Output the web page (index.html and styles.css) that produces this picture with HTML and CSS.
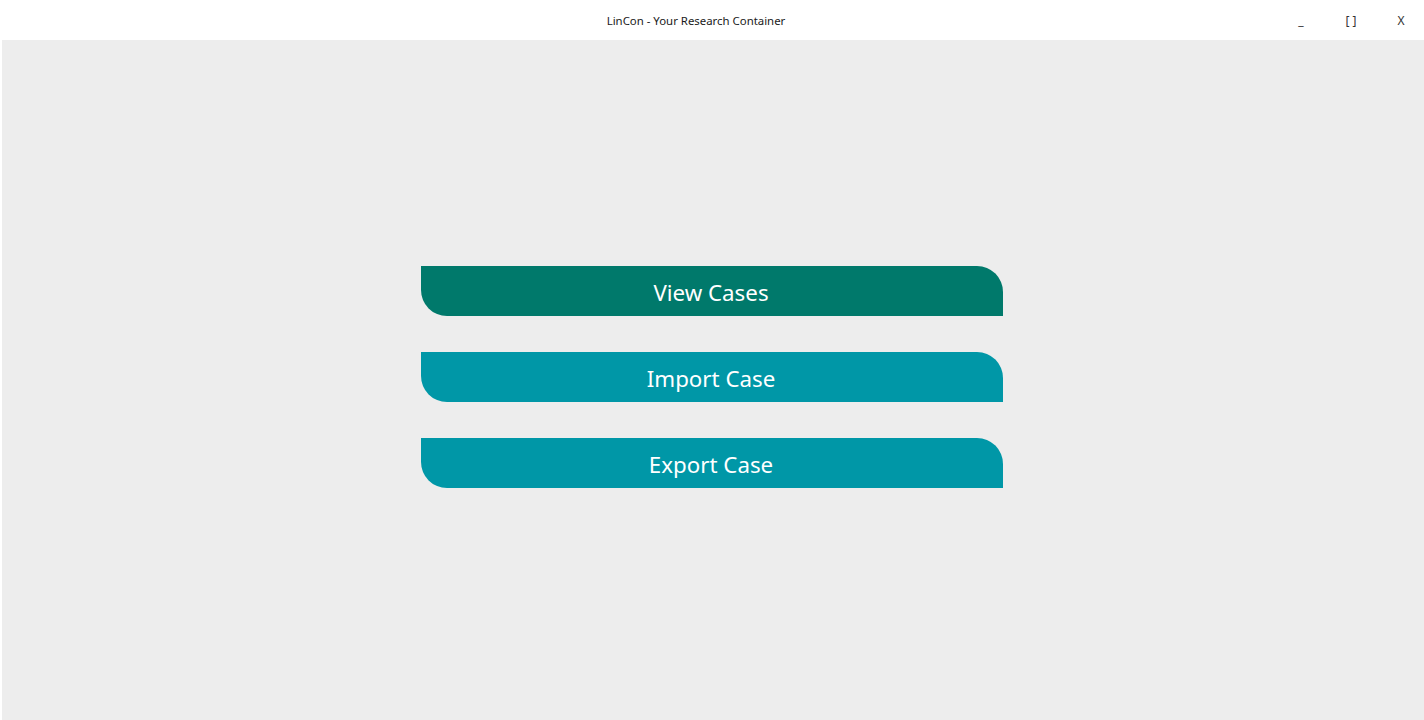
FILE: index.html
```html
<!DOCTYPE html>
<html>
<head>
<meta charset="utf-8">
<link rel="stylesheet" href="styles.css">
</head>
<body>
<div class="window">
  <header class="titlebar">
    <div class="title">LinCon - Your Research Container</div>
    <div class="controls">
      <span class="ctrl">_</span>
      <span class="ctrl">[ ]</span>
      <span class="ctrl">X</span>
    </div>
  </header>
  <main class="content">
    <div class="menu">
      <button class="btn btn-primary">View Cases</button>
      <button class="btn btn-secondary">Import Case</button>
      <button class="btn btn-secondary">Export Case</button>
    </div>
  </main>
</div>
</body>
</html>
```

FILE: styles.css
```css
* { box-sizing: border-box; }
html, body {
  margin: 0;
  padding: 0;
  width: 1424px;
  height: 720px;
  overflow: hidden;
  background: #ffffff;
  font-family: "Noto Sans", "Open Sans", "DejaVu Sans", sans-serif;
}
.window {
  display: flex;
  flex-direction: column;
  height: 720px;
}
.titlebar {
  height: 40px;
  flex: none;
  position: relative;
  display: flex;
  align-items: center;
  justify-content: center;
  background: #ffffff;
}
.title {
  font-size: 11.4px;
  color: #1a1a1a;
  margin-left: -32px;
  margin-top: 1px;
}
.controls {
  position: absolute;
  right: -2px;
  top: 0;
  height: 40px;
  display: flex;
}
.ctrl {
  width: 50px;
  height: 40px;
  display: flex;
  align-items: center;
  justify-content: center;
  font-size: 12px;
  color: #333333;
}
.content {
  flex: 1;
  margin-left: 2px;
  background: #ededed;
  display: flex;
  align-items: center;
  justify-content: center;
}
.menu {
  display: flex;
  flex-direction: column;
  gap: 36px;
  margin-top: -6px;
  margin-left: -2px;
}
.btn {
  width: 582px;
  height: 50px;
  border: none;
  border-radius: 0 26px 0 26px;
  color: #ffffff;
  font-family: "Noto Sans", "Open Sans", "DejaVu Sans", sans-serif;
  font-size: 22.3px;
  padding: 2px 2px 0 0;
  cursor: pointer;
}
.btn-primary { background: #00796b; }
.btn-secondary { background: #0097a7; }
```
